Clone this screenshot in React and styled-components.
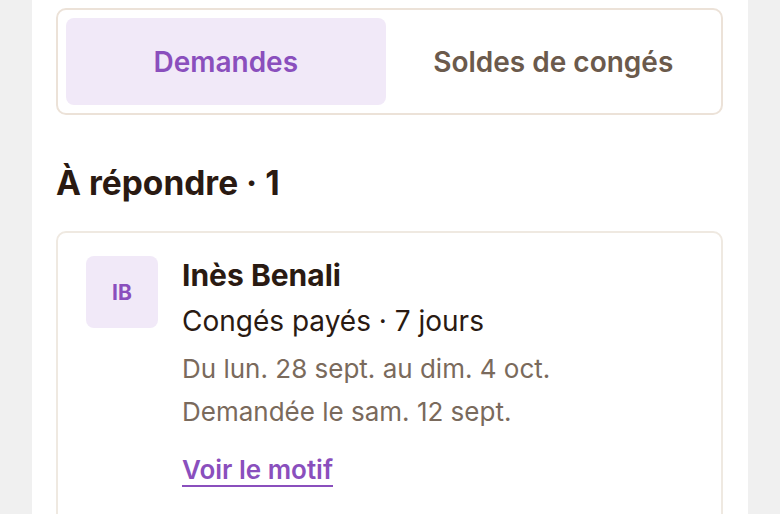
import React from "react";
import styled, { createGlobalStyle } from "styled-components";

const Global = createGlobalStyle`
  html, body {
    margin: 0;
    padding: 0;
    background: #f0f0f0;
    font-family: Inter, "Noto Sans", sans-serif;
  }
`;

export default function App() {
  return (
    <>
      <Global />
      <Panel>
        <Tabs>
          <Tab active>Demandes</Tab>
          <Tab>Soldes de congés</Tab>
        </Tabs>

        <Heading>À répondre · 1</Heading>

        <Card>
          <Avatar>IB</Avatar>
          <Info>
            <Name>Inès Benali</Name>
            <Kind>Congés payés · 7 jours</Kind>
            <Meta first>Du lun. 28 sept. au dim. 4 oct.</Meta>
            <Meta>Demandée le sam. 12 sept.</Meta>
            <MotifLink href="#">Voir le motif</MotifLink>
          </Info>
        </Card>
      </Panel>
    </>
  );
}

const Panel = styled.main`
  margin: 0 32px;
  min-height: 514px;
  background: #ffffff;
  padding: 8px 25px 0 24px;
  box-sizing: border-box;
`;

const Tabs = styled.div`
  display: grid;
  grid-template-columns: 1fr 1fr;
  gap: 8px;
  padding: 8px 8px 8px;
  border: 2px solid #ece2d8;
  border-radius: 10px;
`;

const Tab = styled.button`
  height: 87px;
  border: none;
  border-radius: 8px;
  font-family: inherit;
  font-size: 28px;
  font-weight: 600;
  cursor: pointer;
  background: ${(p) => (p.active ? "#f1e9f8" : "transparent")};
  color: ${(p) => (p.active ? "#8a4fbd" : "#6b5a4c")};
`;

const Heading = styled.h2`
  margin: 48px 0 28px;
  font-size: 33.5px;
  line-height: 40px;
  font-weight: 700;
  color: #2a1a12;
`;

const Card = styled.section`
  display: flex;
  align-items: flex-start;
  gap: 24px;
  padding: 23px 28px 40px;
  border: 2px solid #efe9e1;
  border-radius: 10px;
`;

const Avatar = styled.div`
  flex: none;
  width: 72px;
  height: 72px;
  border-radius: 8px;
  background: #f1e9f8;
  color: #8a4fbd;
  font-size: 21px;
  font-weight: 700;
  display: flex;
  align-items: center;
  justify-content: center;
`;

const Info = styled.div`
  display: flex;
  flex-direction: column;
  align-items: flex-start;
`;

const Name = styled.div`
  font-size: 30px;
  line-height: 38px;
  font-weight: 700;
  color: #2a1a12;
`;

const Kind = styled.div`
  margin-top: 8px;
  font-size: 28px;
  line-height: 38px;
  color: #2a1a12;
`;

const Meta = styled.div`
  margin-top: ${(p) => (p.first ? "11px" : "7px")};
  font-size: 26px;
  line-height: 36px;
  color: #7a6a5c;
`;

const MotifLink = styled.a`
  margin-top: 22px;
  font-size: 26px;
  line-height: 36px;
  font-weight: 600;
  color: #8a4fbd;
  text-decoration: underline;
  text-decoration-thickness: 2px;
  text-underline-offset: 6px;
`;
